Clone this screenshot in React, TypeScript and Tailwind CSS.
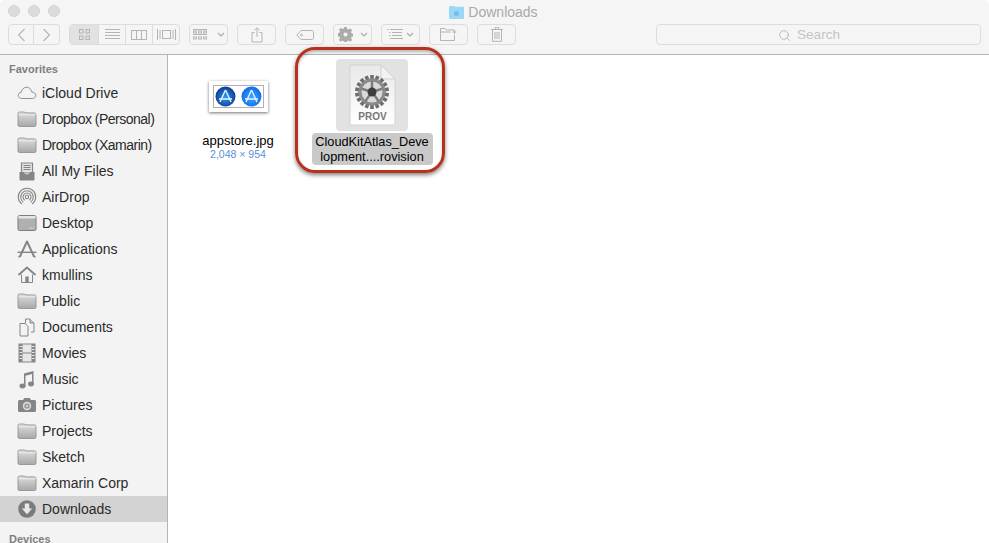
import type { ReactNode } from "react";
import { Search } from "lucide-react";

const G = "#858585";

function Folder() {
  return (
    <svg width="20" height="18" viewBox="0 0 20 18">
      <defs>
        <linearGradient id="fold" x1="0" y1="0" x2="0" y2="1">
          <stop offset="0" stopColor="#dedede" />
          <stop offset="1" stopColor="#a8a8a8" />
        </linearGradient>
      </defs>
      <path d="M1 3.500C1 2.500 1.600 2 2.500 2H7c.8 0 1.200.9 2 .9h8.500c.9 0 1.500.6 1.500 1.500V15c0 .9-.6 1.500-1.500 1.500h-15C1.600 16.500 1 15.900 1 15Z" fill="url(#fold)" stroke="#8c8c8c" strokeWidth="0.8" />
      <path d="M1.400 4.800h17.200" stroke="#f4f4f4" strokeWidth="0.8" />
    </svg>
  );
}

const icons: Record<string, ReactNode> = {
  cloud: (
    <svg width="20" height="18" viewBox="0 0 20 18">
      <path d="M5 14.500C2.800 14.500 1.200 13.200 1.200 11.300 1.200 9.600 2.500 8.500 4.100 8.300 4.800 5.500 6.900 3.200 9.600 3.200c2.700 0 4.700 2.300 5.200 4.800 2.300.1 4 1.500 4 3.400 0 1.800-1.500 3.100-3.600 3.100Z" fill="none" stroke={G} strokeWidth="0.9" />
    </svg>
  ),
  folder: <Folder />,
  files: (
    <svg width="20" height="19" viewBox="0 0 20 19">
      <path d="M4.500 1h11v10h-11Z" fill="#e4e4e4" stroke={G} strokeWidth="1.200" />
      <path d="M6.500 3.500h7M6.500 5.500h7M6.500 7.500h7" stroke={G} />
      <path d="M2.500 10h4.500c0 1.800 1.200 2.400 3 2.400s3-.6 3-2.400h4.500v7.500c0 .6-.4 1-1 1h-13c-.6 0-1-.4-1-1Z" fill={G} />
    </svg>
  ),
  airdrop: (
    <svg width="20" height="20" viewBox="0 0 20 20" fill="none" stroke={G}>
      <path d="M5 17.100A8.700 8.700 0 1 1 15 17.100" strokeWidth="1.100" />
      <path d="M6.300 15.200A6.300 6.300 0 1 1 13.700 15.200" strokeWidth="1.100" />
      <path d="M7.700 13.200A4 4 0 1 1 12.300 13.200" strokeWidth="1.100" />
      <circle cx="10" cy="10" r="1.700" strokeWidth="1.100" />
    </svg>
  ),
  desktop: (
    <svg width="20" height="18" viewBox="0 0 20 18">
      <rect x="1" y="1.500" width="18" height="15" rx="1.500" fill="#b0b0b0" stroke="#7d7d7d" />
      <rect x="1.500" y="2" width="17" height="2.500" fill="#e6e6e6" />
      <path d="M12 14h.9M14 14h.9M16 14h.9" stroke="#f2f2f2" />
    </svg>
  ),
  apps: (
    <svg width="20" height="18" viewBox="0 0 20 18" fill="none" stroke={G}>
      <path d="M10.200 1 3 16.500M9.800 1 17 16.500" strokeWidth="2" />
      <path d="M.5 12.300h19" strokeWidth="1.400" />
      <path d="M1.500 17 4 16M18.500 17 16 16" strokeWidth="1.400" />
    </svg>
  ),
  home: (
    <svg width="20" height="18" viewBox="0 0 20 18">
      <path d="M1.500 9 10 1.500 18.500 9" fill="none" stroke={G} strokeWidth="1.800" />
      <path d="M4.500 8.500V16.500H15.500V8.500" fill="#f2f2f2" stroke={G} />
      <rect x="8.300" y="10.500" width="3.400" height="6" fill={G} />
    </svg>
  ),
  docs: (
    <svg width="20" height="19" viewBox="0 0 20 19" fill="#f3f3f3" stroke={G}>
      <path d="M8.500 1h4.500l4 4v9h-3" />
      <path d="M3 5.500h5l3 3v9.500H3Z" />
      <path d="M8.500 1v4.500" />
      <path d="M13 1v4h4" fill="#cfcfcf" />
    </svg>
  ),
  movies: (
    <svg width="20" height="20" viewBox="0 0 20 20">
      <rect x="2" y="1" width="16" height="18" fill="#e8e8e8" stroke={G} />
      <rect x="2" y="1" width="3.500" height="18" fill={G} />
      <rect x="14.500" y="1" width="3.500" height="18" fill={G} />
      <path d="M2.500 3.500h2.500M2.500 6.500h2.500M2.500 9.500h2.500M2.500 12.500h2.500M2.500 15.500h2.500M15 3.500h2.500M15 6.500h2.500M15 9.500h2.500M15 12.500h2.500M15 15.500h2.500" stroke="#e8e8e8" />
      <path d="M5.500 10h9" stroke={G} />
    </svg>
  ),
  music: (
    <svg width="20" height="19" viewBox="0 0 20 19" fill={G}>
      <path d="M7 3.500 16.500 1v13h-1.500V4L8.500 5.700V16.500H7Z" />
      <ellipse cx="5.500" cy="16" rx="3" ry="2.400" />
      <ellipse cx="14" cy="14" rx="3" ry="2.400" />
    </svg>
  ),
  camera: (
    <svg width="20" height="18" viewBox="0 0 20 18">
      <path d="M2.500 4H6l1.300-2h5.400L14 4h3.500c.8 0 1.500.6 1.500 1.500v9c0 .9-.7 1.500-1.500 1.500h-15C1.700 16 1 15.400 1 14.500v-9C1 4.600 1.700 4 2.500 4Z" fill={G} />
      <circle cx="10" cy="10" r="4.200" fill="#dedede" />
      <circle cx="10" cy="10" r="2.600" fill={G} />
      <circle cx="10" cy="10" r="1.500" fill="#cfcfcf" />
    </svg>
  ),
  download: (
    <svg width="20" height="20" viewBox="0 0 20 20">
      <circle cx="10" cy="10" r="8.800" fill="#7b7b7b" />
      <path d="M7.800 4.500h4.400v5h3L10 15.300 4.800 9.500h3Z" fill="#e8e8e8" />
    </svg>
  ),
};

const favorites = [
  ["iCloud Drive", "cloud"],
  ["Dropbox (Personal)", "folder"],
  ["Dropbox (Xamarin)", "folder"],
  ["All My Files", "files"],
  ["AirDrop", "airdrop"],
  ["Desktop", "desktop"],
  ["Applications", "apps"],
  ["kmullins", "home"],
  ["Public", "folder"],
  ["Documents", "docs"],
  ["Movies", "movies"],
  ["Music", "music"],
  ["Pictures", "camera"],
  ["Projects", "folder"],
  ["Sketch", "folder"],
  ["Xamarin Corp", "folder"],
  ["Downloads", "download"],
];

function Btn({ w, children, className = "" }: { w: string; children: ReactNode; className?: string }) {
  return (
    <div className={`${w} h-[21px] flex items-center justify-center gap-[3px] rounded-[4px] border border-[#dcdcdc] ${className}`}>
      {children}
    </div>
  );
}

function Chevron() {
  return (
    <svg width="8" height="5" viewBox="0 0 8 5" fill="none" stroke="#a8a8a8" strokeWidth="1.100">
      <path d="M1 1l3 3 3-3" />
    </svg>
  );
}

function Toolbar() {
  const s = "#b4b4b4";
  return (
    <div className="h-[55px] shrink-0 bg-[#f5f5f5] border-b border-[#b5b5b5] rounded-t-[5px] flex flex-col">
      <div className="h-[24px] relative flex items-center justify-center">
        <div className="absolute left-[8px] top-[5px] flex gap-[8px]">
          <span className="w-[12px] h-[12px] rounded-full bg-[#dcdcdc] border border-[#d2d2d2]" />
          <span className="w-[12px] h-[12px] rounded-full bg-[#dcdcdc] border border-[#d2d2d2]" />
          <span className="w-[12px] h-[12px] rounded-full bg-[#dcdcdc] border border-[#d2d2d2]" />
        </div>
        <div className="flex items-center gap-[4px] text-[14px] text-[#a9a9a9] mr-[2px]">
          <svg width="15" height="13" viewBox="0 0 15 13">
            <path d="M0 1.500C0 .6.500 0 1.300 0H5c.7 0 1 .8 1.700.8h7c.8 0 1.300.5 1.300 1.300v9.400c0 .9-.5 1.500-1.300 1.500H1.300C.5 13 0 12.400 0 11.500Z" fill="#9cd7f5" />
            <circle cx="7.500" cy="7.500" r="2.500" fill="#6fc0ea" />
          </svg>
          <span>Downloads</span>
        </div>
      </div>
      <div className="flex items-start px-[8px] gap-[9px] h-[21px]">
        <div className="flex">
          <Btn w="w-[26px]" className="rounded-r-none">
            <svg width="9" height="14" viewBox="0 0 9 14" fill="none" stroke={s} strokeWidth="1.100"><path d="M7.500 1 1.500 7l6 6" /></svg>
          </Btn>
          <Btn w="w-[26px]" className="rounded-l-none border-l-0">
            <svg width="9" height="14" viewBox="0 0 9 14" fill="none" stroke={s} strokeWidth="1.100"><path d="M1.500 1l6 6-6 6" /></svg>
          </Btn>
        </div>
        <div className="w-[111px] h-[21px] flex rounded-[4px] border border-[#dcdcdc] divide-x divide-[#dcdcdc]">
          <div className="w-[29px] bg-[#e2e2e2] rounded-l-[3px] flex items-center justify-center">
            <svg width="11" height="11" viewBox="0 0 11 11" fill="none" stroke={s}><rect x=".5" y=".5" width="3.500" height="3.500" /><rect x="7" y=".5" width="3.500" height="3.500" /><rect x=".5" y="7" width="3.500" height="3.500" /><rect x="7" y="7" width="3.500" height="3.500" /></svg>
          </div>
          <div className="w-[27px] flex items-center justify-center">
            <svg width="15" height="11" viewBox="0 0 15 11" stroke={s}><path d="M0 .5h15M0 3.500h15M0 6.500h15M0 9.500h15" /></svg>
          </div>
          <div className="w-[27px] flex items-center justify-center">
            <svg width="16" height="10" viewBox="0 0 16 10" fill="none" stroke={s}><rect x=".5" y=".5" width="15" height="9" /><path d="M5.500 0v10M10.500 0v10" /></svg>
          </div>
          <div className="flex-1 flex items-center justify-center">
            <svg width="19" height="11" viewBox="0 0 19 11" fill="none" stroke={s}><rect x="5.500" y="1.500" width="8" height="8" /><path d="M.5 0v11M3 1v9M16 1v9M18.500 0v11" /></svg>
          </div>
        </div>
        <Btn w="w-[39px]">
          <svg width="14" height="11" viewBox="0 0 14 11" fill="none" stroke={s}><path d="M0 .5h14M0 5.500h14" /><rect x=".5" y="2" width="3" height="2" /><rect x="5.500" y="2" width="3" height="2" /><rect x="10.500" y="2" width="3" height="2" /><rect x=".5" y="8" width="3" height="2" /><rect x="5.500" y="8" width="3" height="2" /><rect x="10.500" y="8" width="3" height="2" /></svg>
          <span className="w-[4px]" />
          <Chevron />
        </Btn>
        <Btn w="w-[39px]">
          <svg width="12" height="16" viewBox="0 0 12 16" fill="none" stroke={s}><path d="M3.500 5.500H1V15h10V5.500H8.500M6 10V1M3.500 3.300 6 .8l2.500 2.500" /></svg>
        </Btn>
        <Btn w="w-[39px]">
          <svg width="18" height="10" viewBox="0 0 18 10" fill="none" stroke={s}><path d="M5 .5h11c.8 0 1.500.7 1.500 1.500v6c0 .8-.7 1.500-1.500 1.500H5L.8 5Z" /><circle cx="5.500" cy="5" r="1" /></svg>
        </Btn>
        <Btn w="w-[39px]">
          <svg width="15" height="15" viewBox="0 0 15 15"><path d="M6.200 0h2.600l.4 2 1.300.6 1.800-1.100 1.800 1.800-1.100 1.800.6 1.300 2 .4v2.600l-2 .4-.6 1.300 1.100 1.800-1.800 1.800-1.800-1.100-1.300.6-.4 2H6.200l-.4-2-1.300-.6-1.800 1.100-1.800-1.800 1.100-1.800-.6-1.300-2-.4V6.200l2-.4.6-1.300-1.100-1.800 1.800-1.800 1.800 1.100 1.300-.6Z" fill="#ababab" /><circle cx="7.500" cy="7.500" r="2" fill="#f5f5f5" /></svg>
          <span className="w-[1px]" />
          <Chevron />
        </Btn>
        <Btn w="w-[39px]">
          <svg width="16" height="11" viewBox="0 0 16 11" stroke={s}><path d="M0 .5h1.500M3 .5h13M2 3.500h1.500M5 3.500h10M2 6.500h1.500M5 6.500h10M3 9.500h13" /></svg>
          <Chevron />
        </Btn>
        <Btn w="w-[39px]">
          <svg width="17" height="13" viewBox="0 0 17 13" fill="none" stroke={s}><path d="M.5 12.500V.5H5l1.200 1.500h8.300v2M.5 4h10M.5 12.500h14V7M14.500 2v4M12.500 4h4" /></svg>
        </Btn>
        <Btn w="w-[39px]">
          <svg width="12" height="15" viewBox="0 0 12 15" fill="none" stroke={s}><path d="M0 2.500h12M4 2.500V.7h4v1.800M1.500 2.500v11.800h9V2.500M4 5v7M6 5v7M8 5v7" /></svg>
        </Btn>
        <div className="ml-[131px] w-[325px] h-[21px] rounded-[4px] border border-[#dcdcdc] flex items-center justify-center gap-[6px] pr-[19px] pt-[1px] text-[13.5px] text-[#c4c4c4]">
          <Search size={13} color="#b0b0b0" strokeWidth={1.500} />
          <span>Search</span>
        </div>
      </div>
    </div>
  );
}

function Sidebar() {
  return (
    <aside className="w-[168px] shrink-0 bg-[#f3f3f3] border-r border-[#b5b5b5] overflow-hidden">
      <div className="h-[25px] pl-[9px] pt-[7px] text-[11px] font-bold text-[#7f7f7f] leading-[14px]">Favorites</div>
      {favorites.map(([name, icon]) => (
        <div
          key={name}
          className={`h-[26px] flex items-center pl-[17px] gap-[5px] text-[14px] text-[#2a2a2a] ${name === "Downloads" ? "bg-[#d3d3d3]" : ""}`}
        >
          <span className="w-[20px] h-[20px] flex items-center justify-center shrink-0">{icons[icon]}</span>
          <span className={`whitespace-nowrap ${name.startsWith("Dropbox") ? "tracking-[-0.5px]" : ""}`}>{name}</span>
        </div>
      ))}
      <div className="pl-[9px] pt-[10px] text-[11px] font-bold text-[#7f7f7f] leading-[14px]">Devices</div>
    </aside>
  );
}

function AppstoreThumb() {
  return (
    <div className="w-[59px] h-[31px] bg-white shadow-[0_1px_3px_rgba(0,0,0,0.55)] p-[4px] mt-[22px]">
      <div className="h-full border border-[#b0b0b0] flex items-center justify-center gap-[5px]">
        {[0, 1].map((i) => (
          <svg key={i} width="21" height="21" viewBox="0 0 21 21">
            <defs>
              <radialGradient id={`orb${i}`} cx="50%" cy="55%" r="60%">
                <stop offset="0" stopColor={i ? "#3aa8ff" : "#2a9cf5"} />
                <stop offset="1" stopColor={i ? "#0a66e8" : "#0a2f86"} />
              </radialGradient>
            </defs>
            <circle cx="10.500" cy="10.500" r="10" fill={`url(#orb${i})`} />
            <path d="M10.500 4 5 16M10.500 4 16 16M4 13h13" fill="none" stroke="#eaf4ff" strokeWidth="1.400" />
          </svg>
        ))}
      </div>
    </div>
  );
}

function ProvIcon() {
  const teeth = Array.from({ length: 18 }, (_, i) => i * 20);
  return (
    <svg width="47" height="62" viewBox="0 0 47 62">
      <defs>
        <linearGradient id="sheet" x1="0" y1="0" x2="0" y2="1">
          <stop offset="0" stopColor="#e9e9e9" />
          <stop offset="1" stopColor="#ffffff" />
        </linearGradient>
      </defs>
      <path d="M1 1h31l14 14v46H1Z" fill="url(#sheet)" stroke="#d2d2d2" />
      <path d="M32 1v14h14Z" fill="#f2f2f2" stroke="#cfcfcf" />
      <g transform="translate(23 28)">
        {teeth.map((a) => (
          <rect key={a} x="-1.800" y="-17" width="3.600" height="5" fill="#6e6e6e" transform={`rotate(${a})`} />
        ))}
        <circle r="13.500" fill="#8a8a8a" />
        <circle r="10.500" fill="#d9d9d9" />
        <g stroke="#7a7a7a" strokeWidth="2.400">
          {[0, 72, 144, 216, 288].map((a) => (
            <path key={a} d="M0 0V-11" transform={`rotate(${a})`} />
          ))}
        </g>
        <circle r="4.500" fill="#3e3e3e" />
      </g>
      <text x="23.500" y="56" textAnchor="middle" fontSize="10" fontWeight="700" fill="#777777">PROV</text>
    </svg>
  );
}

function Files() {
  return (
    <main className="relative flex-1 bg-white">
      <div className="flex items-start pl-[33px] pt-[4px] gap-[36px]">
        <div className="w-[74px] flex flex-col items-center">
          <div className="h-[72px] flex justify-center"><AppstoreThumb /></div>
          <div className="mt-[2px] text-[13px] leading-[16px] text-black whitespace-nowrap">appstore.jpg</div>
          <div className="text-[10.5px] leading-[11px] text-[#5a8fdc] whitespace-nowrap">2,048 × 954</div>
        </div>
        <div className="w-[122px] flex flex-col items-center">
          <div className="w-[72px] h-[72px] rounded-[4px] bg-[#e2e2e2] flex items-center justify-center"><ProvIcon /></div>
          <div className="mt-[2px] w-[121px] bg-[#c9c9c9] rounded-[4px] text-center text-[12.75px] leading-[15px] text-black py-[1px] whitespace-nowrap">
            <div>CloudKitAtlas_Deve</div>
            <div>lopment....rovision</div>
          </div>
        </div>
      </div>
      {/* red callout drawn over the selected file */}
      <div className="absolute left-[127px] top-[-8px] w-[150px] h-[126px] rounded-[20px] border-[3px] border-[#b7321c] shadow-[0_2px_4px_rgba(0,0,0,0.5),inset_0_2px_3px_rgba(0,0,0,0.25)]" />
    </main>
  );
}

export default function App() {
  return (
    <div className="w-[989px] h-[543px] overflow-hidden flex flex-col bg-white font-['Liberation_Sans',Arial,sans-serif]">
      <Toolbar />
      <div className="flex flex-1 min-h-0">
        <Sidebar />
        <Files />
      </div>
    </div>
  );
}
